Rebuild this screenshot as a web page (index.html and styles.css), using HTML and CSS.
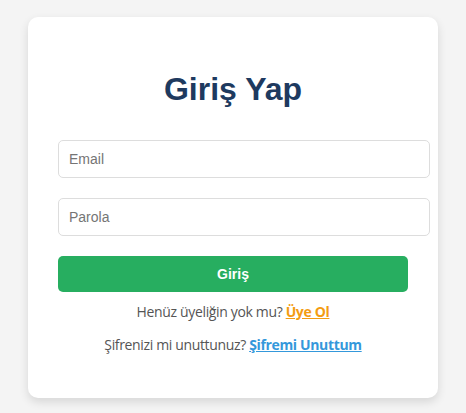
FILE: index.html
```html
<!DOCTYPE html>
<html lang="tr">
<head>
<meta charset="utf-8">
<title>Giriş Yap</title>
<link rel="stylesheet" href="styles.css">
</head>
<body>
<div class="card">
  <h1 class="title">Giriş Yap</h1>
  <form class="form">
    <input class="field" type="email" placeholder="Email">
    <input class="field" type="password" placeholder="Parola">
    <button class="submit" type="button">Giriş</button>
  </form>
  <div class="links">
    <p class="line">Henüz üyeliğin yok mu? <a class="link link-orange" href="#">Üye Ol</a></p>
    <p class="line">Şifrenizi mi unuttunuz? <a class="link link-blue" href="#">Şifremi Unuttum</a></p>
  </div>
</div>
</body>
</html>
```
FILE: styles.css
```css
html, body {
  margin: 0;
  height: 100%;
}
body {
  background: #f4f4f4;
  display: flex;
  justify-content: center;
  align-items: flex-start;
  font-family: "Liberation Sans", Arial, sans-serif;
}
.card {
  margin-top: 17px;
  width: 350px;
  padding: 30px;
  background: #ffffff;
  border-radius: 10px;
  box-shadow: 0 4px 10px rgba(0, 0, 0, 0.12);
}
.title {
  margin: 24px 0 32px;
  font-size: 32px;
  line-height: 37px;
  font-weight: bold;
  color: #1e3a5f;
  text-align: center;
}
.form {
  display: flex;
  flex-direction: column;
  align-items: flex-start;
  gap: 20px;
  margin: 0;
}
.field {
  box-sizing: content-box;
  width: 350px;
  height: 16px;
  padding: 10px;
  border: 1px solid #dddddd;
  border-radius: 5px;
  font-family: "Liberation Sans", Arial, sans-serif;
  font-size: 14px;
  line-height: 16px;
  color: #333;
  background: #fff;
  outline: none;
}
.field::placeholder {
  color: #757575;
}
.submit {
  width: 350px;
  height: 36px;
  padding: 10px;
  border: none;
  border-radius: 5px;
  background: #27ae60;
  color: #fff;
  font-family: "Liberation Sans", Arial, sans-serif;
  font-size: 14px;
  font-weight: bold;
  line-height: 16px;
}
.links {
  margin-top: 10px;
  display: flex;
  flex-direction: column;
  gap: 14px;
  margin-bottom: 14px;
}
.line {
  margin: 0;
  font-family: "Open Sans", "Noto Sans", sans-serif;
  font-size: 14px;
  line-height: 19px;
  letter-spacing: -0.35px;
  color: #555555;
  text-align: center;
}
.link {
  font-weight: bold;
  text-decoration: underline;
}
.link-orange {
  color: #f39c12;
}
.link-blue {
  color: #3498db;
}
```
